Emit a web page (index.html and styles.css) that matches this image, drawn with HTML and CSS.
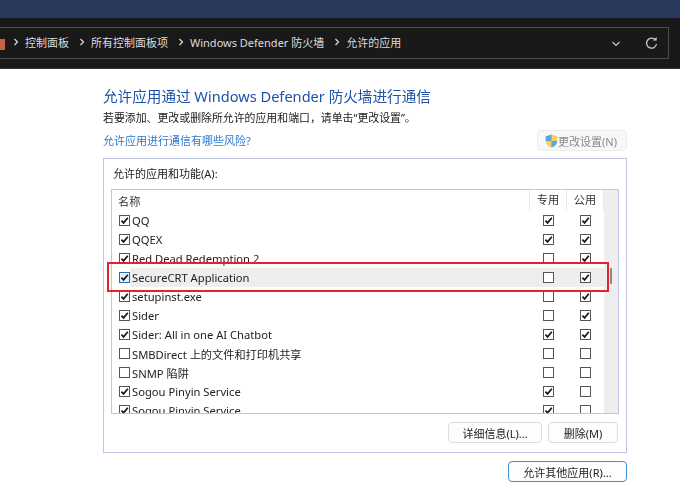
FILE: index.html
```html
<!DOCTYPE html>
<html lang="zh">
<head>
<meta charset="utf-8">
<title>允许的应用</title>
<link rel="stylesheet" href="styles.css">
</head>
<body>
<svg class="defs" width="0" height="0" aria-hidden="true">
  <symbol id="tick" viewBox="0 0 11 11"><path d="M2.4 5.6 4.6 7.9 8.8 2.8" fill="none" stroke="#1a1a1a" stroke-width="1.7"/></symbol>
</svg>
<div class="titlebar"></div>
<header class="toolbar">
  <div class="address">
    <span class="crumb-icon"></span>
    <nav class="crumbs">
      <span class="sep"><svg width="6" height="8" viewBox="0 0 6 8"><path d="M1.5 1 4.5 4 1.5 7" fill="none" stroke="#ddd" stroke-width="1.2"/></svg></span>
      <span class="crumb">控制面板</span>
      <span class="sep"><svg width="6" height="8" viewBox="0 0 6 8"><path d="M1.5 1 4.5 4 1.5 7" fill="none" stroke="#ddd" stroke-width="1.2"/></svg></span>
      <span class="crumb">所有控制面板项</span>
      <span class="sep"><svg width="6" height="8" viewBox="0 0 6 8"><path d="M1.5 1 4.5 4 1.5 7" fill="none" stroke="#ddd" stroke-width="1.2"/></svg></span>
      <span class="crumb">Windows Defender 防火墙</span>
      <span class="sep"><svg width="6" height="8" viewBox="0 0 6 8"><path d="M1.5 1 4.5 4 1.5 7" fill="none" stroke="#ddd" stroke-width="1.2"/></svg></span>
      <span class="crumb">允许的应用</span>
    </nav>
    <svg class="chev" width="10" height="6" viewBox="0 0 10 6"><path d="M1.5 1 5 4.5 8.5 1" fill="none" stroke="#c8c8c8" stroke-width="1.1"/></svg>
    <svg class="refresh" width="13" height="13" viewBox="0 0 13 13"><path d="M10.6 3.2A5 5 0 1 0 11.5 7" fill="none" stroke="#c8c8c8" stroke-width="1.3"/><path d="M8 3.6h3.7V0z" fill="#c8c8c8"/></svg>
  </div>
</header>
<main class="content">
  <h1 class="title">允许应用通过 Windows Defender 防火墙进行通信</h1>
  <p class="hint">若要添加、更改或删除所允许的应用和端口，请单击“更改设置”。</p>
  <div class="link-row">
    <a class="risk">允许应用进行通信有哪些风险?</a>
    <button class="btn settings" disabled>
      <svg width="13" height="14" viewBox="0 0 13 14"><path d="M6.5.5 12.3 2.4V7c0 3-2.4 5.3-5.8 6.5C3.1 12.3.7 10 .7 7V2.4z" fill="#f5cf57"/><path d="M6.5.5V7H.7V2.4zM6.5 7h5.8c0 3-2.4 5.3-5.8 6.5z" fill="#5aa7e0"/></svg>
      更改设置(N)
    </button>
  </div>
  <section class="panel">
    <div class="panel-label">允许的应用和功能(A):</div>
    <div class="list">
      <div class="list-body">
        <div class="head">
          <span class="name-h">名称</span><span class="col-h">专用</span><span class="col-h">公用</span>
        </div>
        <div class="row"><span class="name"><i class="cb on"><svg><use href="#tick"/></svg></i>QQ</span><span class="cell"><i class="cb on"><svg><use href="#tick"/></svg></i></span><span class="cell"><i class="cb on"><svg><use href="#tick"/></svg></i></span></div>
        <div class="row"><span class="name"><i class="cb on"><svg><use href="#tick"/></svg></i>QQEX</span><span class="cell"><i class="cb on"><svg><use href="#tick"/></svg></i></span><span class="cell"><i class="cb on"><svg><use href="#tick"/></svg></i></span></div>
        <div class="row"><span class="name"><i class="cb on"><svg><use href="#tick"/></svg></i>Red Dead Redemption 2</span><span class="cell"><i class="cb"></i></span><span class="cell"><i class="cb on"><svg><use href="#tick"/></svg></i></span></div>
        <div class="row selected"><span class="name"><i class="cb on hot"><svg><use href="#tick"/></svg></i><span class="sel-text">SecureCRT Application</span></span><span class="cell"><i class="cb"></i></span><span class="cell"><i class="cb on"><svg><use href="#tick"/></svg></i></span></div>
        <div class="row"><span class="name"><i class="cb on"><svg><use href="#tick"/></svg></i>setupinst.exe</span><span class="cell"><i class="cb"></i></span><span class="cell"><i class="cb on"><svg><use href="#tick"/></svg></i></span></div>
        <div class="row"><span class="name"><i class="cb on"><svg><use href="#tick"/></svg></i>Sider</span><span class="cell"><i class="cb"></i></span><span class="cell"><i class="cb on"><svg><use href="#tick"/></svg></i></span></div>
        <div class="row"><span class="name"><i class="cb on"><svg><use href="#tick"/></svg></i>Sider: All in one AI Chatbot</span><span class="cell"><i class="cb on"><svg><use href="#tick"/></svg></i></span><span class="cell"><i class="cb on"><svg><use href="#tick"/></svg></i></span></div>
        <div class="row"><span class="name"><i class="cb"></i>SMBDirect 上的文件和打印机共享</span><span class="cell"><i class="cb"></i></span><span class="cell"><i class="cb"></i></span></div>
        <div class="row"><span class="name"><i class="cb"></i>SNMP 陷阱</span><span class="cell"><i class="cb"></i></span><span class="cell"><i class="cb"></i></span></div>
        <div class="row"><span class="name"><i class="cb on"><svg><use href="#tick"/></svg></i>Sogou Pinyin Service</span><span class="cell"><i class="cb on"><svg><use href="#tick"/></svg></i></span><span class="cell"><i class="cb"></i></span></div>
        <div class="row"><span class="name"><i class="cb on"><svg><use href="#tick"/></svg></i>Sogou Pinyin Service</span><span class="cell"><i class="cb on"><svg><use href="#tick"/></svg></i></span><span class="cell"><i class="cb"></i></span></div>
      </div>
      <div class="scrollbar"><span class="thumb"></span></div>
      <div class="redbox"></div>
    </div>
    <div class="panel-actions">
      <button class="btn detail">详细信息(L)...</button>
      <button class="btn remove">删除(M)</button>
    </div>
  </section>
  <div class="bottom-actions">
    <button class="btn primary">允许其他应用(R)...</button>
  </div>
</main>
</body>
</html>
```

FILE: styles.css
```css
* { box-sizing: border-box; }
html, body { margin: 0; height: 100%; }
body {
  width: 680px;
  height: 496px;
  overflow: hidden;
  background: #fff;
  font-family: "Noto Sans", "Noto Sans CJK SC", sans-serif;
  font-size: 11px;
  color: #222;
  filter: blur(0.3px);
}
.defs { position: absolute; }
.titlebar { height: 18px; background: #28395c; }
.toolbar {
  height: 51px;
  background: #191919;
  padding: 9px 11px 10px 0;
  border-bottom: 1px solid #333;
}
.address {
  height: 32px;
  display: flex;
  align-items: center;
  border: 1px solid #4c4c4c;
  border-left: 0;
  color: #dcdcdc;
  font-size: 11px;
}
.crumb-icon { width: 5px; height: 11px; margin-top: 2px; background: #c4624a; flex: none; }
.crumbs { display: flex; align-items: center; flex: 1; padding-left: 3px; padding-bottom: 2px; }
.sep { display: flex; width: 12px; margin-left: 5px; }
.crumb { margin-right: 5px; white-space: nowrap; }
.chev { margin-right: 24px; margin-top: 2px; }
.refresh { margin-right: 10px; margin-top: 1px; }
.content { padding: 16px 53px 0 103px; }
.title {
  margin: 0;
  font-size: 14.6px;
  font-weight: 400;
  line-height: 22px;
  color: #1d52a8;
  white-space: nowrap;
}
.hint { margin: 3px 0 0; font-size: 10.9px; line-height: 16px; color: #1a1a1a; white-space: nowrap; }
.link-row { display: flex; justify-content: space-between; align-items: flex-start; margin-top: 4px; height: 28px; }
.risk { margin-top: 3px; font-size: 11px; line-height: 16px; color: #2a7ad0; }
.btn {
  font: inherit;
  font-size: 11px;
  height: 21px;
  padding: 0;
  background: #fdfdfd;
  border: 1px solid #dcdcdc;
  border-radius: 4px;
  color: #222;
  display: inline-flex;
  align-items: center;
  justify-content: center;
  white-space: nowrap;
}
.settings { width: 90px; gap: 0; padding-right: 2px; color: #8a8a8a; background: #f8f8f8; border-color: #ececec; }
.panel {
  height: 295px;
  border: 1px solid #c0c2e6;
  padding: 7px 7px 0;
}
.panel-label { height: 23px; line-height: 16px; padding-left: 2px; color: #222; }
.list {
  position: relative;
  height: 225px;
  border: 1px solid #c0c2e6;
  display: flex;
}
.list-body { flex: 1; min-width: 0; height: 223px; overflow: hidden; font-size: 11.2px; }
.head { display: flex; height: 21px; align-items: center; }
.name-h { flex: 1; padding-left: 6px; color: #333; }
.col-h { width: 37px; height: 21px; line-height: 20px; text-align: center; border-left: 1px solid #e8e8e8; color: #333; }
.col-h:last-child { border-right: 1px solid #e8e8e8; width: 38px; }
.row { display: flex; height: 19px; align-items: center; }
.name { flex: 1; min-width: 0; display: flex; align-items: center; height: 19px; padding-left: 7px; white-space: nowrap; }
.cell { width: 37px; display: flex; justify-content: center; padding-left: 1px; }
.cell:last-child { width: 38px; }
.cb {
  display: block;
  flex: none;
  width: 11px;
  height: 11px;
  border: 1px solid #555;
  background: #fff;
  position: relative;
}
.cb svg { position: absolute; left: -1px; top: -1px; width: 11px; height: 11px; }
.name .cb { margin-right: 2px; }
.cb.hot { border-color: #2a6da8; background: #e4f0fa; }
.selected { background: linear-gradient(#eeeeee, #eeeeee) no-repeat 18px 0 / 100% 100%; }
.sel-text { flex: 1; }
.scrollbar { width: 14px; background: #eeeeee; position: relative; flex: none; }
.thumb { position: absolute; left: 6px; top: 78px; width: 2px; height: 16px; background: #8a8a8a; }
.redbox {
  position: absolute;
  left: -5px;
  top: 72px;
  width: 502px;
  height: 30px;
  border: 2px solid #e8202e;
}
.panel-actions { display: flex; justify-content: flex-end; gap: 6px; margin-top: 8px; padding-right: 1px; }
.detail { width: 94px; }
.remove { width: 70px; }
.bottom-actions { display: flex; justify-content: flex-end; margin-top: 8px; }
.primary { width: 119px; border-color: #3f8fd6; }
```
